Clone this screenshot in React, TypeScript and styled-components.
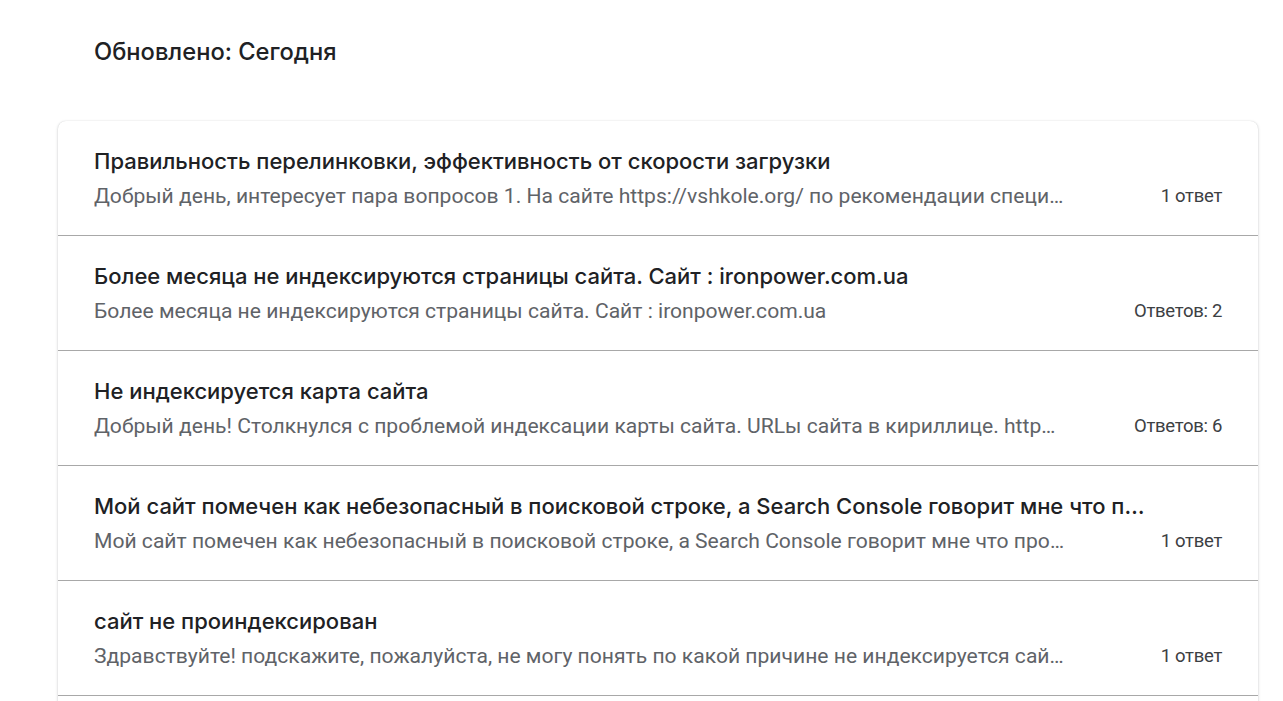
import React from "react";
import styled, { createGlobalStyle } from "styled-components";

const Global = createGlobalStyle`
  html, body { margin: 0; padding: 0; background: #fff; }
  body { font-family: Roboto, "Liberation Sans", Arial, sans-serif; }
`;

const Page = styled.div`
  padding: 0 25px 0 58px;
  display: flex;
  flex-direction: column;
`;

const Header = styled.h2`
  margin: 0;
  padding: 37px 36px 0;
  height: 121px;
  box-sizing: border-box;
  font-family: Inter, "Open Sans", sans-serif;
  font-weight: 500;
  font-size: 23.7px;
  line-height: 30px;
  color: #202124;
`;

const Card = styled.div`
  border-radius: 8px;
  background: #fff;
  box-shadow: 0 1px 3px rgba(60, 64, 67, 0.25), 0 0 1px rgba(60, 64, 67, 0.2);
  overflow: hidden;
`;

const Row = styled.div`
  display: flex;
  flex-direction: column;
  height: 115px;
  box-sizing: border-box;
  padding: 26px 36px 0;
  border-bottom: 1px solid #a8a8a8;
`;

const Title = styled.div`
  font-family: Inter, "Open Sans", sans-serif;
  font-weight: 500;
  font-size: 22px;
  line-height: 28px;
  color: #202124;
  white-space: nowrap;
  overflow: hidden;
  text-overflow: ellipsis;
  max-width: 1053px;
`;

const Meta = styled.div`
  display: flex;
  align-items: center;
  gap: 24px;
  margin-top: 7px;
`;

const Snippet = styled.div`
  flex: 0 1 972px;
  min-width: 0;
  font-size: 21.1px;
  line-height: 28px;
  color: #5f6368;
  white-space: nowrap;
  overflow: hidden;
  text-overflow: ellipsis;
`;

const Count = styled.div`
  margin-left: auto;
  flex: none;
  font-size: 18.5px;
  line-height: 28px;
  color: #3c4043;
  white-space: nowrap;
  letter-spacing: -0.3px;
`;

const items = [
  {
    title: "Правильность перелинковки, эффективность от скорости загрузки",
    snippet:
      "Добрый день, интересует пара вопросов 1. На сайте https://vshkole.org/ по рекомендации специалистов сделали",
    count: "1 ответ",
  },
  {
    title: "Более месяца не индексируются страницы сайта. Сайт : ironpower.com.ua",
    snippet: "Более месяца не индексируются страницы сайта. Сайт : ironpower.com.ua",
    count: "Ответов: 2",
  },
  {
    title: "Не индексируется карта сайта",
    snippet:
      "Добрый день! Столкнулся с проблемой индексации карты сайта. URLы сайта в кириллице. https://example",
    count: "Ответов: 6",
  },
  {
    title:
      "Мой сайт помечен как небезопасный в поисковой строке, а Search Console говорит мне что проблем нет",
    snippet:
      "Мой сайт помечен как небезопасный в поисковой строке, а Search Console говорит мне что проблем нет",
    count: "1 ответ",
  },
  {
    title: "сайт не проиндексирован",
    snippet:
      "Здравствуйте! подскажите, пожалуйста, не могу понять по какой причине не индексируется сайт в поиске",
    count: "1 ответ",
  },
  {
    title: "Сайт не отображается в поиске",
    snippet: "Добрый день! Сайт не отображается в поиске Google",
    count: "1 ответ",
  },
];

export default function App() {
  return (
    <Page>
      <Global />
      <Header>Обновлено: Сегодня</Header>
      <Card>
        {items.map((it, i) => (
          <Row key={i}>
            <Title>{it.title}</Title>
            <Meta>
              <Snippet>{it.snippet}</Snippet>
              <Count>{it.count}</Count>
            </Meta>
          </Row>
        ))}
      </Card>
    </Page>
  );
}
